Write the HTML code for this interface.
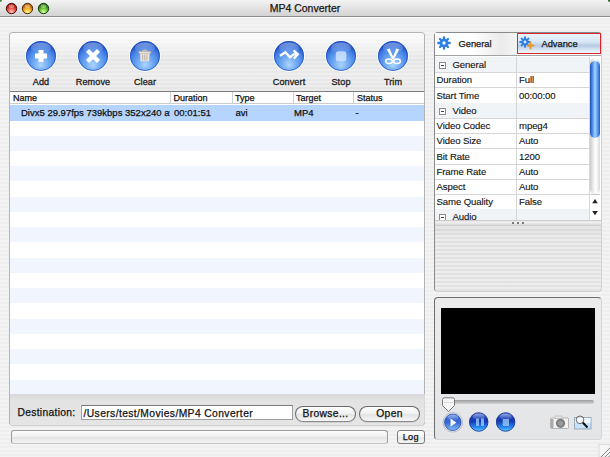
<!DOCTYPE html>
<html><head><meta charset="utf-8">
<style>
*{margin:0;padding:0;box-sizing:border-box}
html,body{width:610px;height:457px;overflow:hidden}
body{position:relative;font-family:"Liberation Sans",sans-serif;font-size:10px;color:#111;
background:repeating-linear-gradient(180deg,#f3f3f3 0,#f3f3f3 2px,#eeeeee 2px,#eeeeee 4px);}
.a{position:absolute;white-space:nowrap}
.tx{-webkit-text-stroke:0.25px #111}
.stripe{background-image:repeating-linear-gradient(180deg,rgba(255,255,255,.18) 0,rgba(255,255,255,.18) 2px,rgba(0,0,0,.01) 2px,rgba(0,0,0,.01) 4px)}
.tl{width:11px;height:11px;border-radius:50%;top:3px}
.pb{width:19px;height:19px;border-radius:50%;
background:radial-gradient(ellipse 70% 45% at 50% 85%,#8fd0ff 0,rgba(100,180,255,0) 100%),linear-gradient(#3f7ee8,#0f46c4 55%,#2a74ec);
box-shadow:inset 0 0 0 1px #12389a,0 0 0 1px rgba(255,255,255,.7)}
.pb::before{content:"";position:absolute;left:3px;top:1px;width:13px;height:8px;border-radius:50%;background:linear-gradient(rgba(255,255,255,.6),rgba(255,255,255,0))}
.lbl{top:77px;width:60px;text-align:center;font-size:9.1px;letter-spacing:0.1px;color:#222;-webkit-text-stroke:0.3px #222 !important}
.hc{top:93px;height:11px;font-size:9px;line-height:11px;color:#111}
.hs{top:92px;width:1px;height:11px;background:#cfcfcf}
.cell{top:107px;font-size:9.5px;line-height:12px;color:#111}
.pbtn{border:1px solid #6a6a6a;border-bottom-color:#8a8a8a;border-radius:8px;background:linear-gradient(#fdfdfd,#f2f2f2 45%,#e4e4e4 55%,#f7f7f7);text-align:center;font-size:10.3px;letter-spacing:.35px;line-height:14px;color:#111;box-shadow:0 1px 0 rgba(0,0,0,.08)}
.prow{left:435px;width:154px;height:15.25px;font-size:9.6px;letter-spacing:-0.1px;line-height:15px;color:#111}
.prow.tx{-webkit-text-stroke:0.12px #111}
.sep{left:435px;width:154px;height:1px;background:#d6d6d6}
.grp{background:#f1f4f7}
.minus{width:7px;height:7px;border:1px solid #8c8c8c;background:#fff}
.minus::after{content:"";position:absolute;left:1px;top:2px;width:3px;height:1px;background:#444}
</style></head><body>
<svg width="0" height="0" style="position:absolute"><defs>
<radialGradient id="gb" cx="50%" cy="72%" r="62%" fx="50%" fy="80%">
<stop offset="0" stop-color="#aed6ff"/><stop offset="0.4" stop-color="#72abf3"/><stop offset="0.78" stop-color="#4682e6"/><stop offset="1" stop-color="#2456c8"/></radialGradient>
<linearGradient id="gh" x1="0" y1="0" x2="0" y2="1"><stop offset="0" stop-color="#fff" stop-opacity=".38"/><stop offset="1" stop-color="#fff" stop-opacity="0"/></linearGradient>
<radialGradient id="gr" cx="50%" cy="80%" r="60%"><stop offset="0" stop-color="#ffc8c0"/><stop offset=".55" stop-color="#ee5a4e"/><stop offset="1" stop-color="#b01e14"/></radialGradient>
<radialGradient id="go" cx="50%" cy="80%" r="60%"><stop offset="0" stop-color="#fff890"/><stop offset=".55" stop-color="#f8b02a"/><stop offset="1" stop-color="#b86200"/></radialGradient>
<radialGradient id="gg" cx="50%" cy="80%" r="60%"><stop offset="0" stop-color="#dcffa8"/><stop offset=".55" stop-color="#6cc834"/><stop offset="1" stop-color="#2e7a14"/></radialGradient>
</defs></svg>

<!-- title bar -->
<div class="a" style="left:0;top:0;width:610px;height:16px;background:linear-gradient(#f3f3f3,#e6e6e6 40%,#d3d3d3)"></div>
<div class="a" style="left:0;top:16px;width:610px;height:1px;background:#8e8e8e"></div>
<div class="a" style="left:0;top:17px;width:610px;height:1px;background:#fbfbfb"></div>
<div class="a" style="left:0;top:0;width:3px;height:3px;background:radial-gradient(circle at 0 0,#4a8a3a 0,#4a8a3a 1.5px,rgba(0,0,0,0) 2.5px)"></div>
<div class="a" style="left:607px;top:0;width:3px;height:3px;background:radial-gradient(circle at 100% 0,#2e5a2a 0,#2e5a2a 1.5px,rgba(0,0,0,0) 2.5px)"></div>
<svg class="a" style="left:5px;top:2px" width="13" height="13" viewBox="0 0 13 13"><circle cx="6.5" cy="6.5" r="5.2" fill="url(#gr)" stroke="#4a120e" stroke-width="1"/><ellipse cx="6.5" cy="4.2" rx="2.8" ry="1.7" fill="#fff" fill-opacity=".4"/></svg>
<svg class="a" style="left:21px;top:2px" width="13" height="13" viewBox="0 0 13 13"><circle cx="6.5" cy="6.5" r="5.2" fill="url(#go)" stroke="#4a2e08" stroke-width="1"/><ellipse cx="6.5" cy="4.2" rx="2.8" ry="1.7" fill="#fff" fill-opacity=".4"/></svg>
<svg class="a" style="left:37px;top:2px" width="13" height="13" viewBox="0 0 13 13"><circle cx="6.5" cy="6.5" r="5.2" fill="url(#gg)" stroke="#1a3e10" stroke-width="1"/><ellipse cx="6.5" cy="4.2" rx="2.8" ry="1.7" fill="#fff" fill-opacity=".4"/></svg>
<div class="a tx" style="left:0;top:2px;width:610px;text-align:center;font-size:10.5px;line-height:12px;color:#1a1a1a">MP4 Converter</div>

<!-- left panel -->
<div class="a" style="left:9px;top:32px;width:416px;height:394px;border-radius:4px;border:1px solid #b5b5b5;border-right-color:#b4b4b4;border-bottom-color:#cfcfcf;background:#e3e3e3;overflow:hidden">
 <div class="a" style="left:0;top:0;width:416px;height:58px;background-image:repeating-linear-gradient(180deg,rgba(255,255,255,.25) 0,rgba(255,255,255,.25) 2px,rgba(0,0,0,0) 2px,rgba(0,0,0,0) 4px),linear-gradient(#fbfbfb 0,#f4f4f4 18%,#e5e5e5 45%,#eaeaea 72%,#e5e5e5 100%)"></div>
 <div class="a" style="left:0;top:361px;width:416px;height:33px;background:linear-gradient(#d9d9d9,#e3e3e3 20%,#e5e5e5)"></div>
</div>
<div class="a" style="left:424px;top:394px;width:1px;height:29px;background:#d6d6d6"></div>
<!-- toolbar buttons placeholder -->
<svg class="a" style="left:25px;top:40px" width="32" height="32" viewBox="-1 -1 32 32"><circle cx="15" cy="15" r="15.5" fill="none" stroke="#fff" stroke-opacity=".85" stroke-width="1"/><circle cx="15" cy="15" r="15" fill="url(#gb)"/><circle cx="15" cy="15" r="14.5" fill="none" stroke="#1d4cc0" stroke-opacity=".6" stroke-width="1"/><ellipse cx="15" cy="7" rx="10" ry="5.5" fill="url(#gh)"/><path d="M12.5 9H17.5V12.5H21V17.5H17.5V21H12.5V17.5H9V12.5H12.5Z" fill="#fff"/></svg>
<svg class="a" style="left:77px;top:40px" width="32" height="32" viewBox="-1 -1 32 32"><circle cx="15" cy="15" r="15.5" fill="none" stroke="#fff" stroke-opacity=".85" stroke-width="1"/><circle cx="15" cy="15" r="15" fill="url(#gb)"/><circle cx="15" cy="15" r="14.5" fill="none" stroke="#1d4cc0" stroke-opacity=".6" stroke-width="1"/><ellipse cx="15" cy="7" rx="10" ry="5.5" fill="url(#gh)"/><g stroke="#fff" stroke-width="4.4" stroke-linecap="butt"><line x1="9.5" y1="9.5" x2="20.5" y2="20.5"/><line x1="20.5" y1="9.5" x2="9.5" y2="20.5"/></g></svg>
<svg class="a" style="left:129px;top:40px" width="32" height="32" viewBox="-1 -1 32 32"><circle cx="15" cy="15" r="15.5" fill="none" stroke="#fff" stroke-opacity=".85" stroke-width="1"/><circle cx="15" cy="15" r="15" fill="url(#gb)"/><circle cx="15" cy="15" r="14.5" fill="none" stroke="#1d4cc0" stroke-opacity=".6" stroke-width="1"/><ellipse cx="15" cy="7" rx="10" ry="5.5" fill="url(#gh)"/><g><path d="M12.5 10.3 Q14.8 7.8 17.2 10.3" fill="none" stroke="#cfc5bb" stroke-width="1.2"/><rect x="8.5" y="10.3" width="12.5" height="2.3" rx="1" fill="#e6ddd3" stroke="#a89888" stroke-width=".5"/><path d="M10 12.6H19.6L19 20.3H10.6Z" fill="#ece6e0"/><g stroke="#b0a294" stroke-width=".8"><line x1="12.6" y1="13.5" x2="12.8" y2="19.5"/><line x1="14.8" y1="13.5" x2="14.8" y2="19.5"/><line x1="17" y1="13.5" x2="16.8" y2="19.5"/></g></g></svg>
<svg class="a" style="left:273px;top:40px" width="32" height="32" viewBox="-1 -1 32 32"><circle cx="15" cy="15" r="15.5" fill="none" stroke="#fff" stroke-opacity=".85" stroke-width="1"/><circle cx="15" cy="15" r="15" fill="url(#gb)"/><circle cx="15" cy="15" r="14.5" fill="none" stroke="#1d4cc0" stroke-opacity=".6" stroke-width="1"/><ellipse cx="15" cy="7" rx="10" ry="5.5" fill="url(#gh)"/><g fill="none" stroke="#fff" stroke-width="2.3" stroke-linejoin="miter" stroke-linecap="butt"><polyline points="6,14.8 11.5,11.2 16,16.4 19.5,13.4 23.5,13.4"/><polyline points="19.6,9.4 23.8,13.4 19.8,17.6"/></g></svg>
<svg class="a" style="left:325px;top:40px" width="32" height="32" viewBox="-1 -1 32 32"><circle cx="15" cy="15" r="15.5" fill="none" stroke="#fff" stroke-opacity=".85" stroke-width="1"/><circle cx="15" cy="15" r="15" fill="url(#gb)"/><circle cx="15" cy="15" r="14.5" fill="none" stroke="#1d4cc0" stroke-opacity=".6" stroke-width="1"/><ellipse cx="15" cy="7" rx="10" ry="5.5" fill="url(#gh)"/><rect x="9.8" y="10.2" width="10.5" height="10" rx="2.5" fill="#cfe2ff" fill-opacity=".85"/></svg>
<svg class="a" style="left:377px;top:40px" width="32" height="32" viewBox="-1 -1 32 32"><circle cx="15" cy="15" r="15.5" fill="none" stroke="#fff" stroke-opacity=".85" stroke-width="1"/><circle cx="15" cy="15" r="15" fill="url(#gb)"/><circle cx="15" cy="15" r="14.5" fill="none" stroke="#1d4cc0" stroke-opacity=".6" stroke-width="1"/><ellipse cx="15" cy="7" rx="10" ry="5.5" fill="url(#gh)"/><g fill="#fff"><path d="M8.8 8.6 L11.6 7.6 L15.8 17.4 L14.2 18.2Z"/><path d="M21.2 8.6 L18.4 7.6 L14.2 17.4 L15.8 18.2Z"/></g><g fill="none" stroke="#fff" stroke-width="1.5"><ellipse cx="11" cy="20.3" rx="3.4" ry="2.3"/><ellipse cx="19" cy="20.3" rx="3.4" ry="2.3"/></g></svg>
<div class="a lbl tx" style="left:11px">Add</div>
<div class="a lbl tx" style="left:63px">Remove</div>
<div class="a lbl tx" style="left:115px">Clear</div>
<div class="a lbl tx" style="left:259px">Convert</div>
<div class="a lbl tx" style="left:311px">Stop</div>
<div class="a lbl tx" style="left:363px">Trim</div>

<!-- table -->
<div class="a" style="left:10px;top:91px;width:414px;height:1px;background:#7c7c7c"></div>
<div class="a" style="left:10px;top:92px;width:414px;height:302px;background:#fff"></div>
<div class="a" style="left:10px;top:103px;width:414px;height:1px;background:#cdcdcd"></div>
<div class="a" style="left:10px;top:105.25px;width:414px;height:289px;background:repeating-linear-gradient(180deg,#f1f5fd 0,#f1f5fd 15.25px,#fff 15.25px,#fff 30.5px)"></div>
<div class="a" style="left:10px;top:105.25px;width:414px;height:15.25px;background:#b6d5fe"></div>
<div class="a hs" style="left:170px"></div><div class="a hs" style="left:232px"></div><div class="a hs" style="left:293px"></div><div class="a hs" style="left:353px"></div>
<div class="a hc tx" style="left:13px">Name</div>
<div class="a hc tx" style="left:173.5px">Duration</div>
<div class="a hc tx" style="left:235px">Type</div>
<div class="a hc tx" style="left:296px">Target</div>
<div class="a hc tx" style="left:357px">Status</div>
<div class="a cell tx" style="left:21px;width:149px;overflow:hidden">Divx5 29.97fps 739kbps 352x240 avi</div>
<div class="a cell tx" style="left:174px">00:01:51</div>
<div class="a cell tx" style="left:235.5px">avi</div>
<div class="a cell tx" style="left:294px">MP4</div>
<div class="a cell tx" style="left:355.5px">-</div>

<!-- destination -->
<div class="a tx" style="left:17.5px;top:407px;font-size:10.3px;line-height:12px;letter-spacing:.3px">Destination:</div>
<div class="a" style="left:81px;top:405px;width:212px;height:15px;background:#fff;border:1px solid #a0a0a0;border-top-color:#7a7a7a"></div>
<div class="a tx" style="left:83.5px;top:408px;font-size:10.3px;line-height:12px;letter-spacing:.4px">/Users/test/Movies/MP4 Converter</div>
<div class="a pbtn tx" style="left:295px;top:406px;width:61px;height:16px">Browse...</div>
<div class="a pbtn tx" style="left:359px;top:406px;width:61px;height:16px">Open</div>
<div class="a" style="left:10.5px;top:430px;width:377.5px;height:13.5px;border:1px solid #9c9c9c;border-bottom-color:#c4c4c4;border-radius:3px;background:linear-gradient(#fdfdfd,#eeeeee 50%,#e3e3e3 51%,#f3f3f3)"></div>
<div class="a tx" style="left:397px;top:429.5px;width:27.5px;height:14px;border:1px solid #7a7a7a;border-radius:3px;background:linear-gradient(#fff,#f3f3f3 50%,#e6e6e6 51%,#f6f6f6);text-align:center;font-size:9.2px;line-height:12px;letter-spacing:.2px">Log</div>

<!-- right top panel -->
<div class="a" style="left:434px;top:32px;width:168px;height:260px;border-radius:4px;border:1px solid #8a8a8a;border-right-color:#d0d0d0;border-bottom-color:#d0d0d0;background:#e6e6e6;overflow:hidden">
 <div class="a" style="left:0;top:194px;width:167px;height:66px;background:repeating-linear-gradient(180deg,rgba(255,255,255,.3) 0,rgba(255,255,255,.3) 2px,rgba(0,0,0,.015) 2px,rgba(0,0,0,.015) 4px),linear-gradient(#d8d8d8,#e4e4e4 15%,#e6e6e6)"></div>
</div>
<div class="a" style="left:435px;top:33px;width:166px;height:23px;background:#fff"></div>
<div class="a" style="left:435px;top:33px;width:82px;height:22px;background:linear-gradient(90deg,#fff 0,#fff 45%,#ebebeb 80%,#f4f4f4 100%)"></div>
<div class="a" style="left:435px;top:55px;width:166px;height:1px;background:#a4a4a4"></div>
<svg class="a" style="left:437px;top:36px" width="14" height="14" viewBox="0 0 14 14"><g stroke="#2c7de8" stroke-width="2.3" stroke-linecap="round"><line x1="7" y1="1.3" x2="7" y2="12.7"/><line x1="1.3" y1="7" x2="12.7" y2="7"/><line x1="3" y1="3" x2="11" y2="11"/><line x1="11" y1="3" x2="3" y2="11"/></g><circle cx="7" cy="7" r="4.3" fill="#2c7de8"/><circle cx="7" cy="7" r="1.7" fill="#fff"/></svg>
<div class="a tx" style="left:458.5px;top:39px;font-size:9.3px;line-height:11px;color:#1a1a1a">General</div>
<div class="a" style="left:517px;top:33px;width:84px;height:21px;border:1.5px solid #d8262c;background:linear-gradient(#eaf3fc,#d9e8f7 40%,#b7cbe3 62%,#dce9f6 85%,#eef5fc)"></div>
<svg class="a" style="left:519px;top:36px" width="18" height="15" viewBox="0 0 18 15"><g stroke="#2c7de8" stroke-width="2" stroke-linecap="round"><line x1="6" y1="1.2" x2="6" y2="10.8"/><line x1="1.2" y1="6" x2="10.8" y2="6"/><line x1="2.6" y1="2.6" x2="9.4" y2="9.4"/><line x1="9.4" y1="2.6" x2="2.6" y2="9.4"/></g><circle cx="6" cy="6" r="3.5" fill="#2c7de8"/><circle cx="6" cy="6" r="1.4" fill="#dbe9f7"/><g stroke="#f39320" stroke-width="1.8" stroke-linecap="round"><line x1="11.5" y1="6.5" x2="11.5" y2="12.5"/><line x1="8.5" y1="9.5" x2="14.5" y2="9.5"/></g></svg>
<div class="a tx" style="left:541.5px;top:39px;font-size:9.3px;line-height:11px;color:#1a1a1a">Advance</div>
<div class="a" style="left:435px;top:56px;width:166px;height:164px;background:#fff"></div>
<div class="a prow grp" style="top:56.75px;height:15.25px"></div>
<div class="a minus" style="left:439px;top:62px"></div>
<div class="a prow tx" style="left:452.5px;width:60px;top:56.80px">General</div>
<div class="a sep" style="top:72.0px"></div>
<div class="a prow tx" style="left:436.5px;width:80px;top:72.40px">Duration</div>
<div class="a prow tx" style="left:519px;width:70px;top:72.40px">Full</div>
<div class="a sep" style="top:87.25px"></div>
<div class="a prow tx" style="left:436.5px;width:80px;top:87.65px">Start Time</div>
<div class="a prow tx" style="left:519px;width:70px;top:87.65px">00:00:00</div>
<div class="a sep" style="top:102.5px"></div>
<div class="a prow grp" style="top:102.5px;height:15.25px"></div>
<div class="a minus" style="left:439px;top:108px"></div>
<div class="a prow tx" style="left:452.5px;width:60px;top:102.55px">Video</div>
<div class="a sep" style="top:117.75px"></div>
<div class="a prow tx" style="left:436.5px;width:80px;top:118.15px">Video Codec</div>
<div class="a prow tx" style="left:519px;width:70px;top:118.15px">mpeg4</div>
<div class="a sep" style="top:133.0px"></div>
<div class="a prow tx" style="left:436.5px;width:80px;top:133.40px">Video Size</div>
<div class="a prow tx" style="left:519px;width:70px;top:133.40px">Auto</div>
<div class="a sep" style="top:148.25px"></div>
<div class="a prow tx" style="left:436.5px;width:80px;top:148.65px">Bit Rate</div>
<div class="a prow tx" style="left:519px;width:70px;top:148.65px">1200</div>
<div class="a sep" style="top:163.5px"></div>
<div class="a prow tx" style="left:436.5px;width:80px;top:163.90px">Frame Rate</div>
<div class="a prow tx" style="left:519px;width:70px;top:163.90px">Auto</div>
<div class="a sep" style="top:178.75px"></div>
<div class="a prow tx" style="left:436.5px;width:80px;top:179.15px">Aspect</div>
<div class="a prow tx" style="left:519px;width:70px;top:179.15px">Auto</div>
<div class="a sep" style="top:194.0px"></div>
<div class="a prow tx" style="left:436.5px;width:80px;top:194.40px">Same Quality</div>
<div class="a prow tx" style="left:519px;width:70px;top:194.40px">False</div>
<div class="a sep" style="top:209.25px"></div>
<div class="a prow grp" style="top:209.25px;height:15.25px"></div>
<div class="a minus" style="left:439px;top:214px"></div>
<div class="a prow tx" style="left:452.5px;width:60px;top:209.30px">Audio</div>
<div class="a" style="left:516px;top:57px;width:1px;height:163px;background:#d6d6d6"></div>
<div class="a" style="left:589px;top:57px;width:12px;height:163px;background:#fff;border-left:1px solid #d8d8d8"></div>
<div class="a" style="left:590px;top:58px;width:10px;height:136px;border-radius:5px;background:linear-gradient(90deg,#c9c9c9,#f4f4f4 40%,#fff 60%,#d8d8d8)"></div>
<div class="a" style="left:589.5px;top:61px;width:10.5px;height:77px;border-radius:5.25px;background:linear-gradient(90deg,#1f4fb8,#4d8ee8 25%,#a9d2fb 50%,#5b9cf0 75%,#2558c4)"></div>
<div class="a" style="left:590px;top:194px;width:10px;height:1px;background:#c8c8c8"></div>
<svg class="a" style="left:591px;top:197px" width="8" height="20" viewBox="0 0 8 20"><path d="M4 2 L6.8 6.3 H1.2Z" fill="#222"/><path d="M4 18.3 L6.8 14 H1.2Z" fill="#222"/></svg>
<div class="a" style="left:435px;top:220px;width:166px;height:6px;background:linear-gradient(#bdbdbd,#f2f2f2 30%,#e3e3e3 70%,#c8c8c8)"></div>
<div class="a" style="left:512px;top:222px;width:2px;height:2px;background:#555;border-radius:1px;box-shadow:5px 0 #555,10px 0 #555"></div>

<!-- video panel -->
<div class="a" style="left:434px;top:297px;width:168px;height:143px;border-radius:4px;border:1px solid #6e6e6e;border-right-color:#d6d6d6;border-bottom-color:#d6d6d6;background:linear-gradient(#ebebeb,#e4e5e7)"></div>
<div class="a" style="left:441px;top:308px;width:153.5px;height:86px;background:#000"></div>
<div class="a" style="left:442px;top:400px;width:152px;height:3.5px;border-radius:2px;background:linear-gradient(#9c9c9c,#d4d4d4)"></div>
<svg class="a" style="left:441px;top:397px" width="15" height="16" viewBox="0 0 15 16"><path d="M1.5 2.5 Q1.5 0.8 3.2 0.8 H11.8 Q13.5 0.8 13.5 2.5 V8.5 L7.5 14.5 L1.5 8.5 Z" fill="#f6f6f6" stroke="#777" stroke-width="1"/><rect x="3" y="5" width="9" height="1" fill="#ddd"/></svg>
<svg class="a" style="left:442px;top:412px" width="22" height="21" viewBox="0 0 22 21"><defs>
<linearGradient id="pbg" x1="0" y1="0" x2="0" y2="1"><stop offset="0" stop-color="#2a4fc4"/><stop offset=".45" stop-color="#1536b0"/><stop offset=".8" stop-color="#2a8cf0"/><stop offset="1" stop-color="#5cd0ff"/></linearGradient>
<linearGradient id="ppg" x1="0" y1="0" x2="0" y2="1"><stop offset="0" stop-color="#3c6ad6"/><stop offset=".5" stop-color="#3466d4"/><stop offset="1" stop-color="#86c0f4"/></linearGradient>
<linearGradient id="phl" x1="0" y1="0" x2="0" y2="1"><stop offset="0" stop-color="#fff" stop-opacity=".5"/><stop offset="1" stop-color="#fff" stop-opacity="0"/></linearGradient></defs>
<circle cx="10.8" cy="10.3" r="9.8" fill="#dfe4ea" stroke="#b9c0c8" stroke-width="1"/><circle cx="10.8" cy="10.3" r="8.2" fill="url(#ppg)" stroke="#2248b0" stroke-width=".8"/><ellipse cx="10.8" cy="5.5" rx="5.5" ry="3" fill="url(#phl)"/><path d="M8.5 6.5 L14.4 10.5 L8.5 14.8 Z" fill="#f2f6ff"/></svg>
<svg class="a" style="left:469px;top:412px" width="20" height="20" viewBox="0 0 20 20"><circle cx="9.7" cy="10" r="9.3" fill="url(#pbg)" stroke="#142c90" stroke-width=".8"/><ellipse cx="9.7" cy="4.8" rx="6" ry="3.3" fill="url(#phl)"/><rect x="7" y="6.5" width="3" height="7.5" fill="#9cd4ff" fill-opacity=".75"/><rect x="12" y="6.5" width="3" height="7.5" fill="#9cd4ff" fill-opacity=".75"/></svg>
<svg class="a" style="left:496px;top:412px" width="20" height="20" viewBox="0 0 20 20"><circle cx="9.6" cy="10" r="9.3" fill="url(#pbg)" stroke="#142c90" stroke-width=".8"/><ellipse cx="9.6" cy="4.8" rx="6" ry="3.3" fill="url(#phl)"/><rect x="6.7" y="7" width="6.3" height="7" fill="#9cd4ff" fill-opacity=".75"/></svg>
<svg class="a" style="left:550px;top:415px" width="20" height="15" viewBox="0 0 20 15"><rect x="0.5" y="3" width="18" height="10.5" rx="1" fill="#f3f3f3" stroke="#b5b5b5"/><rect x="5" y="1" width="7" height="2.5" fill="#e6e6e6" stroke="#b5b5b5" stroke-width=".6"/><circle cx="10.5" cy="8.3" r="4.6" fill="#7d7d7d"/><circle cx="10.5" cy="8.3" r="2.6" fill="#9a9a9a"/><rect x="1" y="4" width="2.5" height="9" fill="#a9a9a9"/></svg>
<svg class="a" style="left:574px;top:415px" width="18" height="15" viewBox="0 0 18 15"><rect x="0.5" y="2.5" width="16.5" height="11.5" fill="#c6e1fa" stroke="#9ab" stroke-width="1"/><rect x="1" y="3" width="15.5" height="5" fill="#eef6fe"/><circle cx="6" cy="4.8" r="3.8" fill="#fff" fill-opacity=".6" stroke="#666" stroke-width="1"/><line x1="8.8" y1="7.5" x2="13.5" y2="12.5" stroke="#111" stroke-width="2"/></svg>

<svg class="a" style="left:598px;top:444px" width="12" height="13" viewBox="0 0 12 13"><rect x="1" y="0.5" width="11" height="12.5" fill="#f6f6f6" stroke="#dcdcdc" stroke-width="1"/><g stroke="#8a8a8a" stroke-width="1"><line x1="12" y1="4" x2="3" y2="13"/><line x1="12" y1="8" x2="7" y2="13"/><line x1="12" y1="11.5" x2="10.5" y2="13"/></g></svg>
</body></html>
